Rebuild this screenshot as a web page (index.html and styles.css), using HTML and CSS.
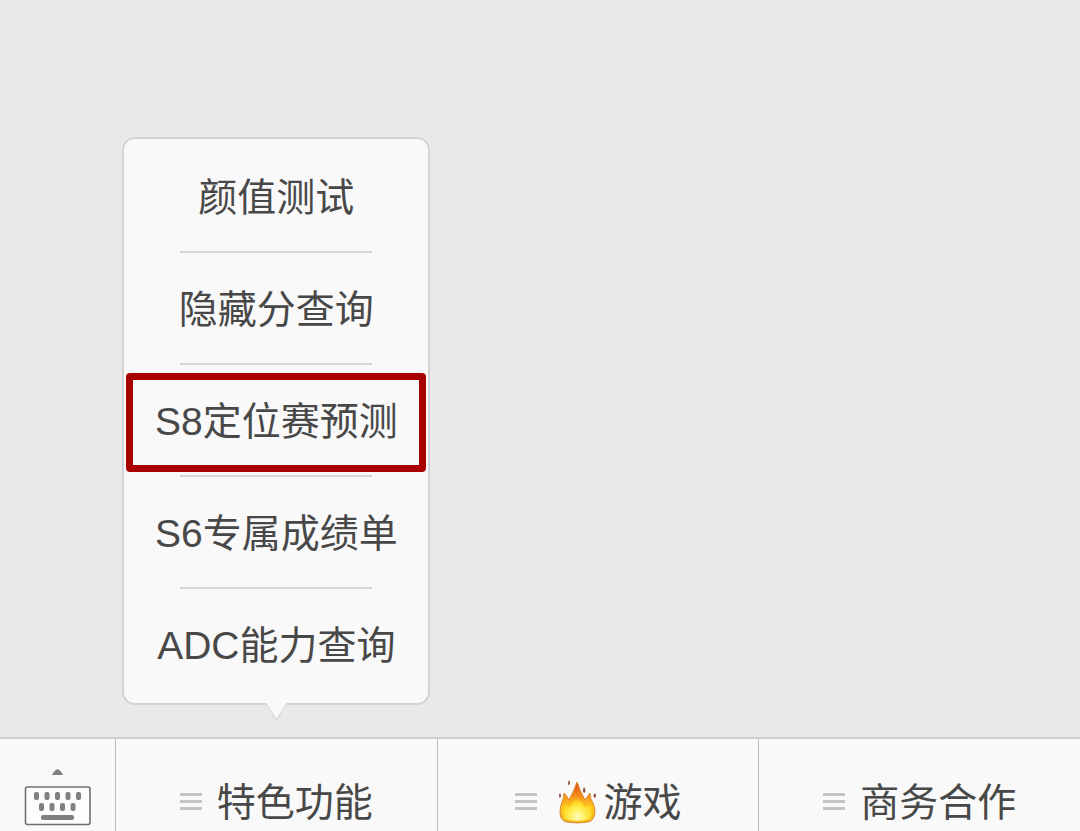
FILE: index.html
```html
<!DOCTYPE html>
<html lang="zh-CN">
<head>
  <meta charset="UTF-8">
  <meta name="viewport" content="width=device-width, initial-scale=1">
  <title>特色功能</title>
  <link rel="stylesheet" href="styles.css">
</head>
<body>

<main class="chat"></main>

<nav class="tabbar">
  <button class="keyboard" type="button" aria-label="键盘">
    <svg width="68" height="58" viewBox="0 0 68 58">
      <path d="M28 7 Q30 2.500 33.500 1 Q37 2.500 39 7 Z" fill="#808080"/>
      <rect x="1.500" y="19" width="64.500" height="37.500" rx="2" fill="#fdfdfd" stroke="#707070" stroke-width="1.600"/>
      <g fill="#808080">
        <rect x="10" y="24" width="5" height="8" rx="2"/>
        <rect x="20.500" y="24" width="5" height="8" rx="2"/>
        <rect x="31" y="24" width="5" height="8" rx="2"/>
        <rect x="41.500" y="24" width="5" height="8" rx="2"/>
        <rect x="52" y="24" width="5" height="8" rx="2"/>
        <rect x="15" y="35" width="5" height="8" rx="2"/>
        <rect x="25.500" y="35" width="5" height="8" rx="2"/>
        <rect x="36" y="35" width="5" height="8" rx="2"/>
        <rect x="46.500" y="35" width="5" height="8" rx="2"/>
        <rect x="17" y="47" width="33" height="5" rx="2"/>
      </g>
    </svg>
  </button>

  <div class="tab">
    <button class="tab-button" type="button" aria-expanded="true">
      <span class="lines"></span>
      <span>特色功能</span>
    </button>

    <ul class="popup">
      <li><button type="button">颜值测试</button></li>
      <li><button type="button">隐藏分查询</button></li>
      <li class="marked"><button type="button">S8定位赛预测</button></li>
      <li><button type="button">S6专属成绩单</button></li>
      <li><button type="button">ADC能力查询</button></li>
    </ul>
  </div>

  <div class="tab">
    <button class="tab-button" type="button">
      <span class="lines"></span>
      <svg class="fire" width="40" height="46" viewBox="0 0 40 46">
        <defs>
          <linearGradient id="flame" x1="0" y1="0" x2="0" y2="1">
            <stop offset="0" stop-color="#d8441c"/>
            <stop offset="0.350" stop-color="#f6921c"/>
            <stop offset="0.600" stop-color="#fdc81e"/>
            <stop offset="1" stop-color="#f5b324"/>
          </linearGradient>
          <radialGradient id="core" cx="50%" cy="85%" r="65%">
            <stop offset="0" stop-color="#fffbc0"/>
            <stop offset="0.400" stop-color="#fff05a"/>
            <stop offset="0.750" stop-color="#ffdc28" stop-opacity="0.900"/>
            <stop offset="1" stop-color="#ffc81e" stop-opacity="0"/>
          </radialGradient>
        </defs>
        <path d="M9 43 Q2 42 2 33 Q2 28 4 23 Q6 19 6 14 Q9 17 11 21 Q16 12 19 3 Q22 12 27 21 Q30 17 32 14 Q32 20 35 24 Q37 28 37 33 Q36 42 30 43 Q20 45 9 43 Z" fill="url(#flame)" stroke="#d9892a" stroke-width="1" stroke-linejoin="round"/>
        <path d="M7 40 Q3 34 7 24 Q9 28 12 28 Q16 23 19 13 Q22 23 27 28 Q30 28 32 24 Q36 34 32 40 Q20 44 7 40 Z" fill="url(#core)"/>
        <g fill="#8c4a3c">
          <path d="M11 1 Q13 4 11 6 Q9 6 11 1 Z"/>
          <path d="M2 14 Q4 17 2 19 Q0 17 2 14 Z"/>
          <path d="M26 8 Q29 12 26 14 Q24 12 26 8 Z"/>
          <path d="M37 14 Q39 17 37 19 Q34 17 37 14 Z"/>
        </g>
      </svg>
      <span>游戏</span>
    </button>
  </div>

  <div class="tab">
    <button class="tab-button" type="button">
      <span class="lines"></span>
      <span>商务合作</span>
    </button>
  </div>
</nav>

</body>
</html>
```

FILE: styles.css
```css
* {
  box-sizing: border-box;
}

body {
  margin: 0;
  height: 100vh;
  display: flex;
  flex-direction: column;
  overflow: hidden;
  background: #e9e9e9;
  color: #484848;
  font-family: "Liberation Sans", "Noto Sans CJK SC", sans-serif;
  font-size: 39px;
  line-height: 56px;
}

button {
  margin: 0;
  padding: 0;
  border: none;
  background: none;
  color: inherit;
  font: inherit;
  white-space: nowrap;
  cursor: pointer;
}

.chat {
  flex: 1;
}

/* Bottom menu bar */
.tabbar {
  display: flex;
  border-top: 2px solid #cdcdcd;
  background: #f9f9f9;
}

.keyboard {
  align-self: flex-start;
  width: 115px;
  padding-top: 29px;
}

.keyboard svg {
  display: block;
  margin: 0 auto;
}

.tab {
  position: relative;
  flex: 1;
  border-left: 1px solid #bcbcbc;
}

.tab-button {
  display: flex;
  align-items: center;
  justify-content: center;
  width: 100%;
  padding: 36px 0 0;
}

.lines {
  width: 22px;
  height: 17px;
  margin-right: 15px;
  margin-bottom: 4px;
  border-top: 3px solid #c4c4c4;
  border-bottom: 3px solid #c4c4c4;
  background: linear-gradient(#c4c4c4, #c4c4c4) center / 22px 3px no-repeat;
}

.fire {
  margin: 0 6px 2px;
}

/* Popup over the first tab */
.popup {
  position: absolute;
  bottom: calc(100% + 34px);
  left: 50%;
  width: 308px;
  margin: 0;
  padding: 2px 0;
  border: 2px solid #d4d4d4;
  border-radius: 13px;
  background: #f9f9f9;
  list-style: none;
  transform: translateX(-50%);
}

.popup::after {
  content: "";
  position: absolute;
  top: 100%;
  left: 50%;
  width: 20px;
  height: 16px;
  margin-left: -10px;
  background: #f9f9f9;
  clip-path: polygon(0 0, 100% 0, 50% 100%);
}

.popup::before {
  content: "";
  position: absolute;
  top: 100%;
  left: 50%;
  width: 22px;
  height: 18px;
  margin-left: -11px;
  background: #d4d4d4;
  clip-path: polygon(0 0, 100% 0, 50% 100%);
}

.popup li {
  position: relative;
  height: 112px;
}

.popup button {
  display: block;
  width: 100%;
  height: 110px;
  padding-top: 4px;
}

.popup li:not(:last-child)::after {
  content: "";
  display: block;
  height: 2px;
  margin: 0 56px;
  background: #d6d6d6;
}

.popup .marked::before {
  content: "";
  position: absolute;
  top: 8px;
  right: 2px;
  bottom: 5px;
  left: 2px;
  border: 7px solid #a90000;
  border-radius: 4px;
  pointer-events: none;
}
```
